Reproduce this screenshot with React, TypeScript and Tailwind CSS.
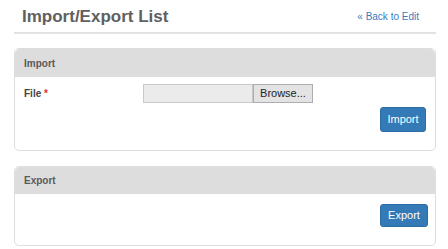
export default function App() {
  return (
    <div className="min-h-screen bg-white pl-[14px] pr-[12px] font-['Liberation_Sans',Arial,sans-serif]">
      {/* Header */}
      <div className="flex h-[34px] items-center justify-between border-b-2 border-[#e2e2e2] pl-[8px] pr-[17px]">
        <h1 className="text-[17px] font-bold leading-none text-[#606060]">Import/Export List</h1>
        <a href="#" className="text-[10px] text-[#3a7cbf]">
          « Back to Edit
        </a>
      </div>

      {/* Import panel */}
      <div className="mt-[14px] rounded-[5px] border border-[#dedede]">
        <div className="flex h-[28px] items-center rounded-t-[5px] bg-[#dddddd] px-[9px] text-[10px] font-bold text-[#5a5a5a]">
          Import
        </div>
        <div className="px-[9px] pb-[18px] pt-[7px]">
          <div className="flex h-[19px] items-center">
            <label className="w-[119px] text-[10px] font-bold text-[#444]">
              File <span className="text-[#e03030]">*</span>
            </label>
            <div className="flex h-[19px]">
              <div className="w-[110px] border border-[#c9c9c9] bg-[#ebebeb]" />
              <button className="w-[60px] border border-[#adadad] bg-[#e3e3e3] text-[11px] leading-none text-[#222]">
                Browse...
              </button>
            </div>
          </div>
          <div className="mt-[4px] flex justify-end pr-[-1px]">
            <button className="h-[25px] w-[46px] rounded-[3px] border border-[#2e6da4] bg-[#337ab7] text-[11px] text-white">
              Import
            </button>
          </div>
        </div>
      </div>

      {/* Export panel */}
      <div className="mt-[15px] rounded-[5px] border border-[#dedede]">
        <div className="flex h-[27px] items-center rounded-t-[5px] bg-[#dddddd] px-[9px] text-[10px] font-bold text-[#5a5a5a]">
          Export
        </div>
        <div className="flex justify-end px-[7px] pb-[18px] pt-[10px]">
          <button className="h-[23px] w-[48px] rounded-[3px] border border-[#2e6da4] bg-[#337ab7] text-[11px] text-white">
            Export
          </button>
        </div>
      </div>
    </div>
  );
}
